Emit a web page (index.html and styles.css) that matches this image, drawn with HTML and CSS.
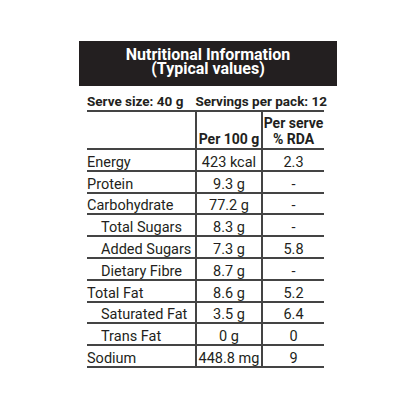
FILE: index.html
```html
<!DOCTYPE html>
<html>
<head>
<meta charset="utf-8">
<link rel="stylesheet" href="styles.css">
</head>
<body>
<div class="label">
  <div class="title">
    <div>Nutritional Information</div>
    <div>(Typical values)</div>
  </div>
  <div class="serve">
    <span>Serve size: 40 g</span>
    <span>Servings per pack: 12</span>
  </div>
  <table class="facts">
    <tr class="head">
      <th class="name"></th>
      <th class="v100">Per 100 g</th>
      <th class="rda">Per serve<br>% RDA</th>
    </tr>
    <tr><td class="name">Energy</td><td>423 kcal</td><td>2.3</td></tr>
    <tr><td class="name">Protein</td><td>9.3 g</td><td>-</td></tr>
    <tr><td class="name">Carbohydrate</td><td>77.2 g</td><td>-</td></tr>
    <tr><td class="name sub">Total Sugars</td><td>8.3 g</td><td>-</td></tr>
    <tr><td class="name sub">Added Sugars</td><td>7.3 g</td><td>5.8</td></tr>
    <tr><td class="name sub">Dietary Fibre</td><td>8.7 g</td><td>-</td></tr>
    <tr><td class="name">Total Fat</td><td>8.6 g</td><td>5.2</td></tr>
    <tr><td class="name sub">Saturated Fat</td><td>3.5 g</td><td>6.4</td></tr>
    <tr><td class="name sub">Trans Fat</td><td>0 g</td><td>0</td></tr>
    <tr><td class="name">Sodium</td><td>448.8 mg</td><td>9</td></tr>
  </table>
</div>
</body>
</html>
```
FILE: styles.css
```css
html, body {
  margin: 0;
  padding: 0;
  background: #ffffff;
}
body {
  font-family: Roboto, "Liberation Sans", sans-serif;
  color: #231f20;
}
.label {
  width: 258px;
  margin: 41px 0 0 79px;
  display: flex;
  flex-direction: column;
}
.title {
  background: #231f20;
  color: #ffffff;
  font-weight: bold;
  font-size: 16px;
  line-height: 14px;
  text-align: center;
  height: 45px;
  box-sizing: border-box;
  padding-top: 7px;
  white-space: nowrap;
}
.serve {
  display: flex;
  justify-content: space-between;
  font-weight: bold;
  font-size: 13.5px;
  line-height: 17px;
  padding: 7px 10px 0 8px;
  height: 24px;
  box-sizing: border-box;
  white-space: nowrap;
}
.facts {
  margin-left: 8px;
  width: 237px;
  border-collapse: collapse;
  table-layout: fixed;
  font-size: 14.5px;
  border-top: 2px solid #444;
}
.facts td, .facts th {
  padding: 0;
  text-align: center;
  vertical-align: bottom;
  border-bottom: 2px solid #444;
  line-height: 14px;
  height: 19.8px;
  white-space: nowrap;
}
.facts th {
  font-weight: bold;
  font-size: 14px;
  line-height: 16px;
  height: 35px;
  padding-bottom: 1px;
}
.facts .name {
  width: 108px;
  text-align: left;
  border-right: 2px solid #444;
}
.facts td:nth-child(2), .facts th:nth-child(2) {
  width: 64px;
  border-right: 2px solid #444;
}
.facts .sub {
  padding-left: 14px;
}
```
